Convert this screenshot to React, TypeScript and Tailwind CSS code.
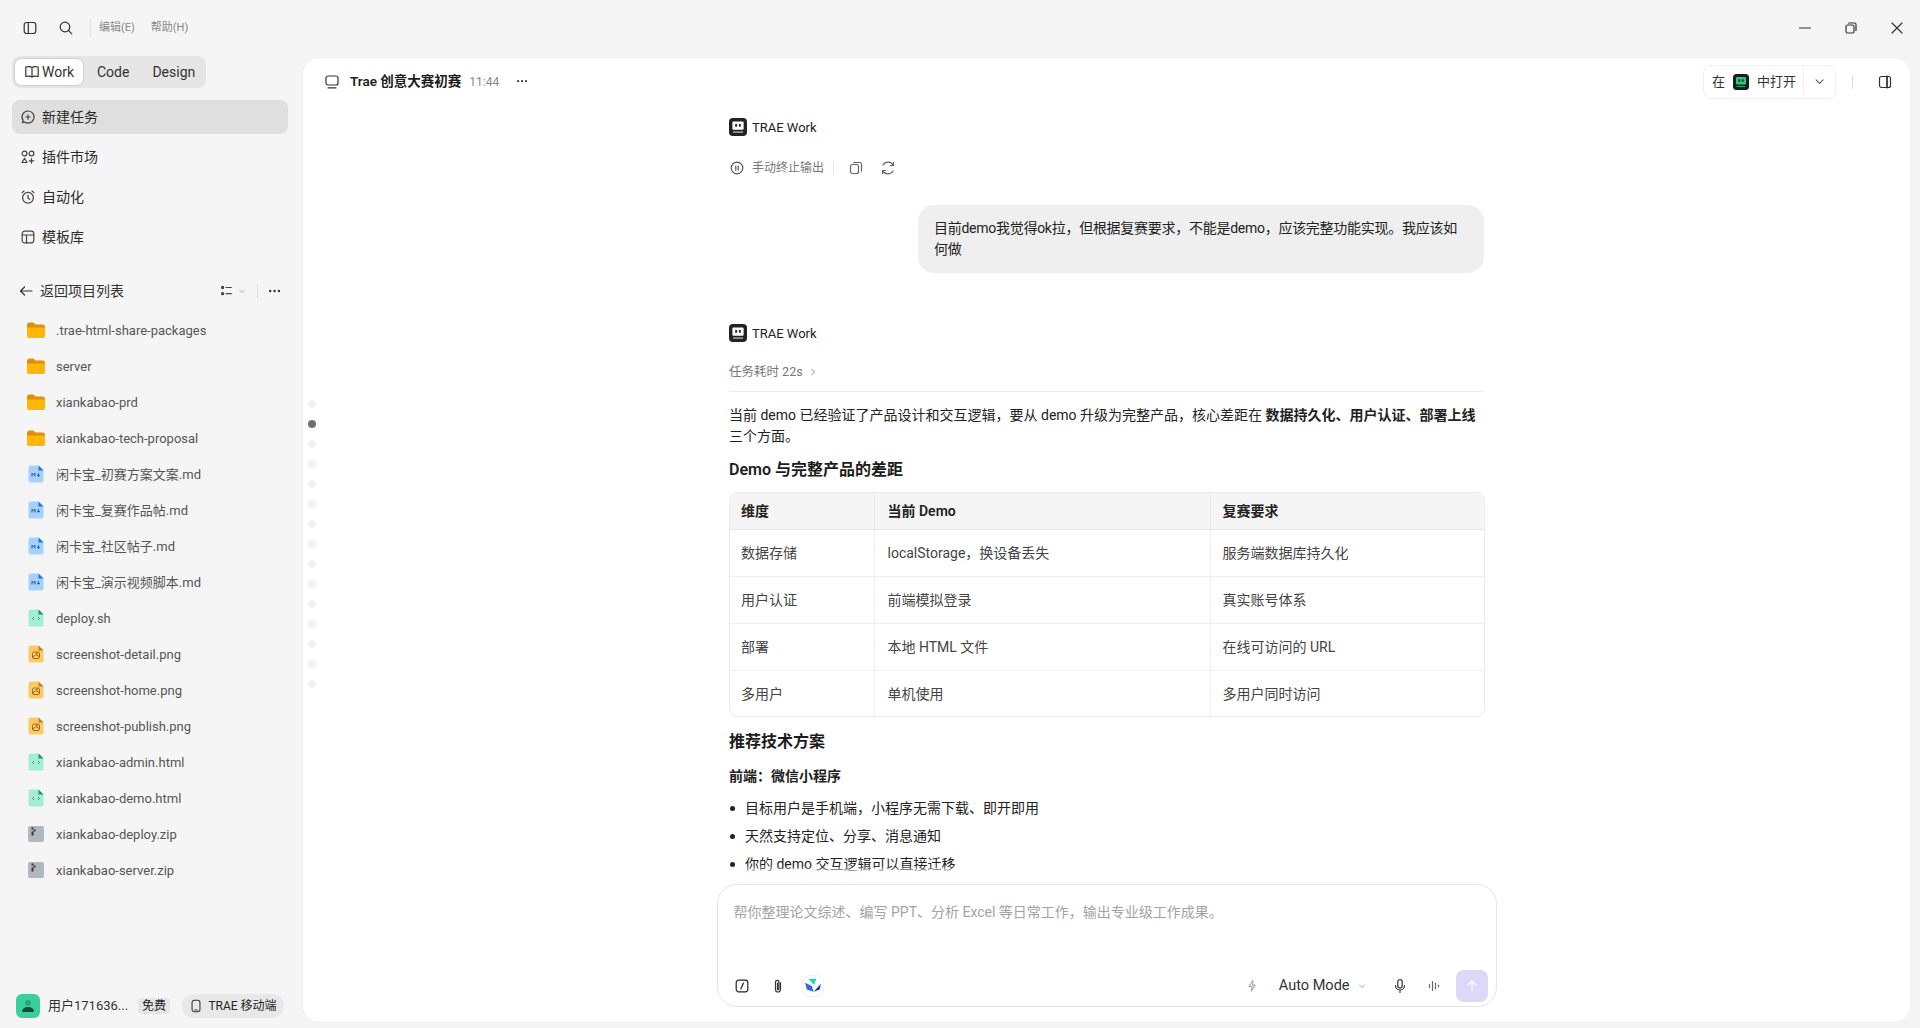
import React from "react";

const FONT = "font-['Roboto','Noto_Sans_CJK_SC',sans-serif]";

type IP = { className?: string; children?: React.ReactNode; size?: number };
const I = ({ className = "", children, size = 16 }: IP) => (
  <svg width={size} height={size} viewBox="0 0 16 16" fill="none" stroke="currentColor" strokeWidth={1.2} strokeLinecap="round" strokeLinejoin="round" className={`shrink-0 ${className}`}>
    {children}
  </svg>
);

const Logo = ({ bg = "#222", fg = "#fff", size = 16 }: { bg?: string; fg?: string; size?: number }) => (
  <svg width={size} height={size} viewBox="0 0 16 16" className="shrink-0">
    <rect width="16" height="16" rx="3.5" fill={bg} />
    <rect x="3" y="3" width="10" height="7.5" rx="1" fill={fg} />
    <rect x="5.5" y="5.3" width="1.7" height="2.4" fill={bg} />
    <rect x="8.8" y="5.3" width="1.7" height="2.4" fill={bg} />
    <path d="M3.500 12.500h9" stroke={fg} strokeWidth="0.8" />
  </svg>
);

const Folder = () => (
  <svg width="20" height="18" viewBox="0 0 20 18" className="shrink-0">
    <path d="M1 4a2.5 2.5 0 0 1 2.5-2.5h4l2 2h7A2.5 2.5 0 0 1 19 6v3H1z" fill="#e08e0b" />
    <path d="M1 6.500h18V15a2 2 0 0 1-2 2H3a2 2 0 0 1-2-2z" fill="#ffb703" />
  </svg>
);

const FileBase = ({ body, corner, children }: { body: string; corner: string; children: React.ReactNode }) => (
  <svg width="16" height="18" viewBox="0 0 16 18" className="shrink-0">
    <path d="M2.5 0.5H10.5L15.5 5.5V15.5a2 2 0 0 1-2 2H2.5a2 2 0 0 1-2-2V2.5a2 2 0 0 1 2-2z" fill={body} />
    <path d="M10.5 0.5L15.5 5.5H10.5z" fill={corner} />
    {children}
  </svg>
);

const FileMd = () => (
  <FileBase body="#a6d1ff" corner="#1473e6">
    <path d="M4 11.500V8l1.500 1.800L7 8v3.500M10.500 8v3.300M9.200 10l1.300 1.400L11.800 10" fill="none" stroke="#1f5fa8" strokeWidth="1" />
  </FileBase>
);
const FileCode = () => (
  <FileBase body="#a3eed3" corner="#0f9d58">
    <path d="M6 8L4.500 9.500 6 11M10 8l1.500 1.500L10 11" fill="none" stroke="#3b8f73" strokeWidth="1" />
  </FileBase>
);
const FilePng = () => (
  <FileBase body="#ffc966" corner="#c77f10">
    <rect x="4.500" y="7" width="7" height="6.500" rx="1.500" fill="none" stroke="#9a6a1c" strokeWidth="1" />
    <path d="M5 12l3-2.500 3 2M8 8.500h2" fill="none" stroke="#9a6a1c" strokeWidth="1" />
  </FileBase>
);
const FileZip = () => (
  <svg width="16" height="16" viewBox="0 0 16 16" className="shrink-0">
    <rect width="16" height="16" rx="2" fill="#b1b7bf" />
    <path d="M3.500 1.500h2v2h-2zM5.500 3.500h2v2h-2zM3.500 5.500h2v2h-2zM5.500 7.500h-2v2h2z" fill="#33373d" />
  </svg>
);

const files: [string, React.ReactNode][] = [
  [".trae-html-share-packages", <Folder />],
  ["server", <Folder />],
  ["xiankabao-prd", <Folder />],
  ["xiankabao-tech-proposal", <Folder />],
  ["闲卡宝_初赛方案文案.md", <FileMd />],
  ["闲卡宝_复赛作品帖.md", <FileMd />],
  ["闲卡宝_社区帖子.md", <FileMd />],
  ["闲卡宝_演示视频脚本.md", <FileMd />],
  ["deploy.sh", <FileCode />],
  ["screenshot-detail.png", <FilePng />],
  ["screenshot-home.png", <FilePng />],
  ["screenshot-publish.png", <FilePng />],
  ["xiankabao-admin.html", <FileCode />],
  ["xiankabao-demo.html", <FileCode />],
  ["xiankabao-deploy.zip", <FileZip />],
  ["xiankabao-server.zip", <FileZip />],
];

const nav: [string, React.ReactNode, boolean][] = [
  ["新建任务", <I><path d="M8 2a6 6 0 1 1-3.400 10.900L2.400 13.600l.7-2.200A6 6 0 0 1 8 2z" /><path d="M8 5.800v4.400M5.800 8h4.400" /></I>, true],
  ["插件市场", <I><circle cx="4.500" cy="4.500" r="2.400" /><circle cx="11.500" cy="4.500" r="2.400" /><path d="M4.500 9.200l2.500 4.300H2zM11.500 9.500v4.600M9.200 11.800h4.600" /></I>, false],
  ["自动化", <I><circle cx="8" cy="8.800" r="5.400" /><path d="M8 6v3l1.800 1.200M2 3.600L4 2M14 3.600L12 2" /></I>, false],
  ["模板库", <I><rect x="2.200" y="2.200" width="11.600" height="11.600" rx="2.500" /><path d="M2.200 6h11.600M6.500 6v7.800" /></I>, false],
];

const rows = [
  ["数据存储", "localStorage，换设备丢失", "服务端数据库持久化"],
  ["用户认证", "前端模拟登录", "真实账号体系"],
  ["部署", "本地 HTML 文件", "在线可访问的 URL"],
  ["多用户", "单机使用", "多用户同时访问"],
];

const Sidebar = () => (
  <aside className="w-[302px] shrink-0 flex flex-col pb-[10px]">
    <div className="ml-3 w-[194px] h-8 rounded-lg bg-[#e6e6e6] flex items-center px-[3px] text-[14px] text-[#333]">
      <div className="w-[68px] h-[26px] rounded-md bg-white shadow-[0_0_2px_rgba(0,0,0,0.3)] flex items-center justify-center gap-[2px]">
        <I size={16} className="text-[#333]"><path d="M8 3.500C6.500 2.600 4 2.600 1.800 3v9.500c2.200-.4 4.700-.4 6.200.5 1.500-.9 4-.9 6.200-.5V3C12 2.600 9.500 2.600 8 3.500zM8 3.500V13" /></I>
        <span>Work</span>
      </div>
      <span className="ml-[14px]">Code</span>
      <span className="ml-[23px]">Design</span>
    </div>
    <nav className="mt-3 mx-3 w-[276px] flex flex-col gap-[6px]">
      {nav.map(([t, ic, active]) => (
        <div key={t} className={`h-[34px] rounded-lg flex items-center gap-[6px] pl-[8px] pr-[9px] text-[14px] text-[#2b2b2b] ${active ? "bg-[#dfdfdf]" : ""}`}>
          <span className="text-[#444]">{ic}</span>
          <span>{t}</span>
        </div>
      ))}
    </nav>
    <div className="mt-[25px] h-6 flex items-center pl-[18px] pr-[20px] text-[14px] text-[#333]">
      <I size={16} className="text-[#333]"><path d="M14 8H2.500M6.500 4l-4 4 4 4" /></I>
      <span className="ml-[6px]">返回项目列表</span>
      <div className="ml-auto flex items-center">
        <I size={14} className="text-[#444]"><circle cx="3" cy="4" r="1.300" fill="currentColor" /><circle cx="3" cy="11" r="1.300" fill="currentColor" /><path d="M7 4h6M7 11h6" /></I>
        <I size={10} className="ml-[3px] text-[#999]"><path d="M4 6.500l4 4 4-4" /></I>
        <div className="ml-[10px] mr-[10px] w-px h-[14px] bg-[#ddd]" />
        <I size={14} className="text-[#333]"><circle cx="2.500" cy="8" r="0.800" fill="currentColor" /><circle cx="7.500" cy="8" r="0.800" fill="currentColor" /><circle cx="12.500" cy="8" r="0.800" fill="currentColor" /></I>
      </div>
    </div>
    <ul className="mt-[10px] flex flex-col">
      {files.map(([name, ic]) => (
        <li key={name} className="h-9 flex items-center text-[13px] text-[#555]">
          <span className="w-[56px] flex justify-center pl-[20px] pr-[4px] mb-[2px]">{ic}</span>
          <span>{name}</span>
        </li>
      ))}
    </ul>
    <div className="mt-auto h-6 flex items-center pl-4">
      <div className="w-6 h-6 rounded-md bg-[#3ccf9e] flex items-center justify-center overflow-hidden">
        <svg width="16" height="16" viewBox="0 0 16 16"><circle cx="8" cy="5" r="3" fill="#27a67c" /><path d="M2 14c0-3.500 2.500-5 6-5s6 1.500 6 5z" fill="#0b4f3b" /></svg>
      </div>
      <span className="ml-2 w-[90px] text-[13px] text-[#333] whitespace-nowrap">用户171636...</span>
      <span className="w-8 h-4 rounded bg-[#e6e6e6] text-[12px] text-[#222] flex items-center justify-center">免费</span>
      <div className="ml-3 w-[102px] h-6 rounded-full bg-[#e8e8e8] flex items-center justify-center gap-[5px] text-[12px] text-[#222]">
        <I size={14} className="text-[#333]"><rect x="3.500" y="1.500" width="9" height="13" rx="2.500" /><path d="M6.500 12.500h3" /></I>
        <span>TRAE 移动端</span>
      </div>
    </div>
  </aside>
);

const Th = ({ children, last, pad }: { children: React.ReactNode; last?: boolean; pad: string }) => (
  <th className={`pr-3 pt-[2px] ${pad} text-left font-semibold text-[14px] text-[#222] h-[36px] bg-[#f5f5f5] border-b border-[#e8e8e8] ${last ? "" : "border-r"}`}>{children}</th>
);
const Td = ({ children, last, bottom, pad }: { children: React.ReactNode; last?: boolean; bottom?: boolean; pad: string }) => (
  <td className={`pr-3 pt-[2px] ${pad} text-[14px] text-[#444] border-[#efefef] ${bottom ? "h-[46px]" : "h-[47px] border-b"} ${last ? "" : "border-r"}`}>{children}</td>
);

const AgentName = () => (
  <div className="h-[22px] flex items-center gap-[5px] text-[13px] text-[#222]">
    <Logo size={18} />
    <span className="mt-px">TRAE Work</span>
  </div>
);

const Main = () => (
  <main className="relative mt-px mr-[9px] mb-[5px] flex-1 min-w-0 rounded-2xl bg-white border border-[#eeeeee] flex flex-col overflow-hidden">
    <header className="h-[47px] shrink-0 flex items-center pl-[21px] pr-[17px]">
      <I size={16} className="text-[#333]"><rect x="2" y="2" width="12" height="9" rx="2" /><path d="M4 13.800h8" /></I>
      <span className="ml-[10px] text-[13.5px] font-semibold text-[#1c1c1c]">Trae 创意大赛初赛</span>
      <span className="ml-2 text-[12px] text-[#888]">11:44</span>
      <I size={14} className="ml-[17px] text-[#444]"><circle cx="2.500" cy="7" r="0.700" fill="currentColor" /><circle cx="7" cy="7" r="0.700" fill="currentColor" /><circle cx="11.500" cy="7" r="0.700" fill="currentColor" /></I>
      <div className="ml-auto w-[133px] h-[34px] rounded-lg border border-[#efefef] flex items-center text-[13px] text-[#333]">
        <span className="ml-2">在</span>
        <span className="ml-2"><Logo size={16} bg="#1c1c1c" fg="#2fc77f" /></span>
        <span className="ml-2">中打开</span>
        <div className="ml-[7px] h-full w-px bg-[#efefef]" />
        <I size={14} className="ml-[9px] text-[#555]"><path d="M3.500 5.500L7.500 9.500 11.500 5.500" /></I>
      </div>
      <div className="ml-[16px] w-px h-[14px] bg-[#ddd]" />
      <I size={16} className="ml-[24px] text-[#333]"><rect x="2.500" y="2.500" width="11" height="11" rx="2" /><path d="M10 2.500v11" strokeWidth="1.800" /></I>
    </header>

    <div className="relative flex-1 min-h-0 overflow-hidden">
      <div className="mx-auto w-[755px] flex flex-col pt-[11px]">
        <AgentName />
        <div className="mt-5 h-5 flex items-center text-[12px] text-[#777]">
          <I size={16} className="text-[#555]"><circle cx="8" cy="8" r="5.800" /><path d="M6.800 6v4M9.200 6v4" /></I>
          <span className="ml-[7px]">手动终止输出</span>
          <div className="ml-[9px] w-px h-[12px] bg-[#e5e5e5]" />
          <I size={16} className="ml-[14px] text-[#666]"><rect x="2.500" y="4.500" width="8" height="9" rx="2" /><path d="M5.500 2.500h6a2 2 0 0 1 2 2v6.500" /></I>
          <I size={16} className="ml-[16px] text-[#666]"><path d="M13.500 5.500a6 6 0 0 0-10.500-.5M2.500 10.500a6 6 0 0 0 10.500 .5M10.500 5.500h3V2.500M5.500 10.500h-3v3" /></I>
        </div>
        <div className="mt-[27px] self-end w-[566px] rounded-2xl bg-[#efefef] pl-4 pr-2 py-[13px] text-[14px] tracking-[-0.27px] leading-[21px] text-[#222]">
          目前demo我觉得ok拉，但根据复赛要求，不能是demo，应该完整功能实现。我应该如<br />何做
        </div>
        <div className="mt-[49px]"><AgentName /></div>
        <div className="mt-[18px] h-5 flex items-center gap-[5px] text-[12.5px] text-[#777]">
          <span>任务耗时 22s</span>
          <I size={10} className="text-[#666]"><path d="M6 3.500l4.500 4.500L6 12.500" /></I>
        </div>
        <div className="mt-[9px] h-px bg-[#ececec]" />
        <p className="mt-[13px] text-[14px] leading-[21px] text-[#222]">
          当前 demo 已经验证了产品设计和交互逻辑，要从 demo 升级为完整产品，核心差距在 <b className="font-semibold">数据持久化、用户认证、部署上线</b> 三个方面。
        </p>
        <h3 className="mt-[11px] h-6 leading-6 text-[16px] font-semibold text-[#1c1c1c]">Demo 与完整产品的差距</h3>
        <div className="mt-[10px] mr-[-1px] rounded-lg border border-[#ececec] overflow-hidden">
          <table className="w-full table-fixed border-collapse">
            <colgroup>
              <col className="w-[144px]" />
              <col className="w-[336px]" />
              <col />
            </colgroup>
            <thead>
              <tr><Th pad="pl-[11px]">维度</Th><Th pad="pl-[13px]">当前 Demo</Th><Th pad="pl-[12px]" last>复赛要求</Th></tr>
            </thead>
            <tbody>
              {rows.map((r, i) => (
                <tr key={i}>
                  <Td pad="pl-[11px]" bottom={i === 3}>{r[0]}</Td>
                  <Td pad="pl-[13px]" bottom={i === 3}>{r[1]}</Td>
                  <Td pad="pl-[12px]" bottom={i === 3} last>{r[2]}</Td>
                </tr>
              ))}
            </tbody>
          </table>
        </div>
        <h3 className="mt-[13px] h-6 leading-6 text-[16px] font-semibold text-[#1c1c1c]">推荐技术方案</h3>
        <div className="mt-3 h-[21px] leading-[21px] text-[14px] font-semibold text-[#222]">前端：微信小程序</div>
        <ul className="mt-[11px] flex flex-col gap-[7px] text-[14px] leading-[21px] text-[#222]">
          {["目标用户是手机端，小程序无需下载、即开即用", "天然支持定位、分享、消息通知", "你的 demo 交互逻辑可以直接迁移"].map((t) => (
            <li key={t} className="flex items-center">
              <span className="ml-[1px] w-[5px] h-[5px] rounded-full bg-[#222]" />
              <span className="ml-[10px]">{t}</span>
            </li>
          ))}
        </ul>
      </div>
      <div className="absolute bottom-0 inset-x-0 h-[8px] bg-gradient-to-t from-white to-transparent" />
    </div>

    <div className="shrink-0 mx-auto mt-[10px] mb-[15px] w-[780px] h-[123px] rounded-[20px] border border-[#e6e6e6] flex flex-col pl-[15px] pr-[8px] pb-[3px]">
      <div className="pt-[17px] pl-px h-[85px] text-[14px] leading-[21px] text-[#a3a3a3]">帮你整理论文综述、编写 PPT、分析 Excel 等日常工作，输出专业级工作成果。</div>
      <div className="flex items-center h-8">
        <I size={16} className="ml-[1px] text-[#222]"><rect x="2.200" y="2.200" width="11.600" height="11.600" rx="2.500" /><path d="M9.500 5L6.800 11" /></I>
        <I size={16} className="ml-[20px] text-[#333]"><path d="M10.500 4.500v7a2.500 2.500 0 0 1-5 0V4a1.700 1.700 0 0 1 3.400 0v7a.7.7 0 0 1-1.400 0V5" /></I>
        <div className="ml-[16px] w-[22px] h-[22px] rounded-lg border border-[#f0f0f0] flex items-center justify-center">
          <svg width="18" height="18" viewBox="0 0 16 16"><path d="M1 5l6 3 1.500 5L2.500 11z" fill="#3366e6" /><path d="M8.500 13L15 6l-1 5z" fill="#1d3fa8" /><path d="M4 1.500h7L9 7z" fill="#26d4b4" /></svg>
        </div>
        <I size={14} className="ml-auto text-[#aaa]"><path d="M8 1.500L3.500 8.500H7L6 14l4.500-7H7.500z" /></I>
        <span className="ml-[19px] text-[14.5px] text-[#333]">Auto Mode</span>
        <I size={10} className="ml-[7px] text-[#888]"><path d="M4 6.500l4 4 4-4" /></I>
        <I size={16} className="ml-[25px] text-[#333]"><rect x="5.800" y="1.500" width="4.400" height="8.500" rx="2.200" /><path d="M3.500 7.500a4.500 4.500 0 0 0 9 0M8 12v2.500" /></I>
        <I size={16} className="ml-[19px] text-[#666]"><path d="M2.500 6.500v3M5.500 3.500v9M8.500 5v6M11.500 7v2" /></I>
        <div className="ml-[13px] w-8 h-8 rounded-lg bg-[#dcd9f8] flex items-center justify-center text-white">
          <I size={16}><path d="M8 13V3M4 7l4-4 4 4" /></I>
        </div>
      </div>
    </div>

    <div className="absolute left-[5px] top-[342px] flex flex-col gap-3">
      {Array.from({ length: 15 }).map((_, i) => (
        <span key={i} className={`w-2 h-2 rounded-full ${i === 1 ? "bg-[#707070]" : "bg-[#f2f2f2]"}`} />
      ))}
    </div>
  </main>
);

export default function App() {
  return (
    <div className={`w-[1920px] h-[1028px] overflow-hidden bg-[#f5f5f5] flex flex-col ${FONT}`}>
      <div className="h-[56px] shrink-0 flex items-center pl-[22px] pr-[15px]">
        <I size={16} className="text-[#333]"><rect x="2.200" y="2.500" width="11.600" height="11" rx="2.500" /><path d="M6.300 2.500v11" /></I>
        <I size={16} className="ml-[20px] text-[#333]"><circle cx="7" cy="7" r="4.800" /><path d="M10.500 10.500l3.300 3.300" /></I>
        <div className="ml-[16px] w-px h-5 bg-[#e2e2e2]" />
        <span className="ml-2 mt-px text-[11px] text-[#888]">编辑(E)</span>
        <span className="ml-[16px] mt-px text-[11px] text-[#888]">帮助(H)</span>
        <div className="ml-auto flex items-center gap-[30px]">
          <I size={16} className="text-[#333]"><path d="M2.500 8h11" /></I>
          <I size={16} className="text-[#333]"><rect x="3" y="5" width="8" height="8" rx="1.500" /><path d="M5.500 3h6a1.500 1.500 0 0 1 1.500 1.500v6" /></I>
          <I size={16} className="text-[#333]"><path d="M3 3l10 10M13 3L3 13" /></I>
        </div>
      </div>
      <div className="flex-1 min-h-0 flex">
        <Sidebar />
        <Main />
      </div>
    </div>
  );
}
